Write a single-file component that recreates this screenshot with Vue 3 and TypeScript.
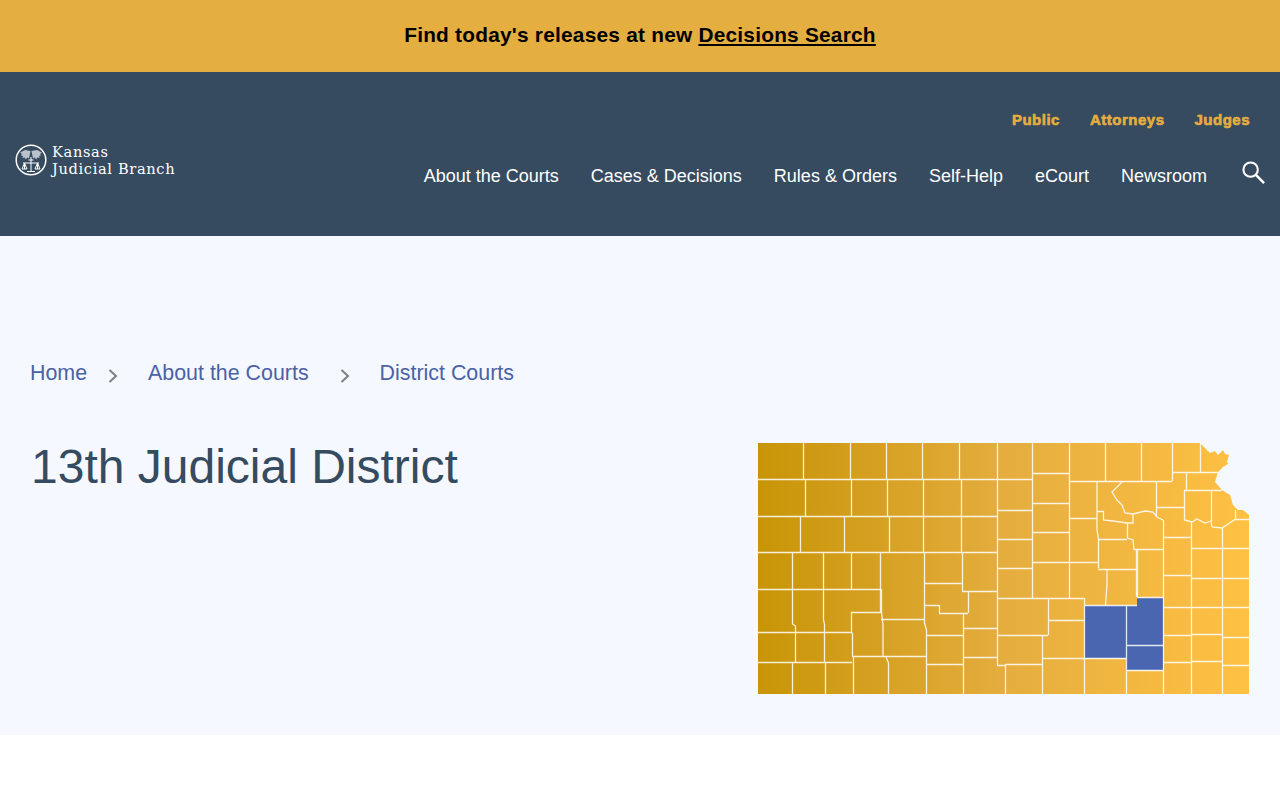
<template>
  <div class="page">
    <div class="banner">
      <p>Find today's releases at new <a href="#">Decisions Search</a></p>
    </div>

    <header class="header">
      <a class="logo" href="#">
        <svg class="seal" viewBox="0 0 32 32" width="32" height="32">
          <circle cx="16" cy="16" r="14.800" fill="none" stroke="#fff" stroke-width="1.500" />
          <path d="M15.500 7L10 6L5 8.500L7 10L6 11.500L8 12L7.500 14L10 13.500L10.500 15.500L12.500 13.500L14 14.500Z" fill="#b9c2ca" />
          <path d="M16.500 7L22 6L27 8.500L25 10L26 11.500L24 12L24.500 14L22 13.500L21.500 15.500L19.500 13.500L18 14.500Z" fill="#b9c2ca" />
          <path d="M16 13V27M8 19H24M13.500 16H18.500M9.500 19V25M22.500 19V25M7 25H12L9.500 19ZM20 25H25L22.500 19ZM12 27.500H20" fill="none" stroke="#fff" stroke-width="1" />
        </svg>
        <span class="logo-text"><span>Kansas</span><span>Judicial Branch</span></span>
      </a>

      <div class="header-right">
        <nav class="audience">
          <a v-for="item in audience" :key="item" href="#">{{ item }}</a>
        </nav>
        <div class="main-row">
          <nav class="main-nav">
            <a v-for="item in mainNav" :key="item" href="#">{{ item }}</a>
          </nav>
          <svg class="search" viewBox="0 0 24 24" width="23" height="23">
            <circle cx="9" cy="9" r="7.500" fill="none" stroke="#fff" stroke-width="2.200" />
            <path d="M14.500 14.500L23 23" fill="none" stroke="#fff" stroke-width="2.600" />
          </svg>
        </div>
      </div>
    </header>

    <main class="hero">
      <nav class="crumbs">
        <template v-for="(crumb, i) in crumbs" :key="crumb">
          <a href="#">{{ crumb }}</a>
          <svg v-if="i < crumbs.length - 1" class="chevron" viewBox="0 0 10 14" width="10" height="14">
            <path d="M1.500 1L8 7L1.500 13" fill="none" stroke="#7b7f88" stroke-width="2" />
          </svg>
        </template>
      </nav>

      <div class="hero-row">
        <h1>13th Judicial District</h1>
        <svg class="map" viewBox="758 443 491 251" width="491" height="251">
          <defs>
            <linearGradient id="mapFill" x1="0" y1="0" x2="1" y2="0">
              <stop offset="0" stop-color="#c89507" />
              <stop offset="0.5" stop-color="#e4ad3e" />
              <stop offset="1" stop-color="#ffc143" />
            </linearGradient>
          </defs>
          <path :d="outline" fill="url(#mapFill)" />
          <path v-for="d in selected" :key="d" :d="d" fill="#4a66b0" />
          <path :d="lines" fill="none" stroke="#fff" stroke-opacity="0.85" stroke-width="1.300" />
        </svg>
      </div>
    </main>
  </div>
</template>

<script setup lang="ts">
const audience = ['Public', 'Attorneys', 'Judges']
const mainNav = ['About the Courts', 'Cases & Decisions', 'Rules & Orders', 'Self-Help', 'eCourt', 'Newsroom']
const crumbs = ['Home', 'About the Courts', 'District Courts']

const outline = 'M758 443H1200L1205 448L1210 453L1215 451L1218 455L1223 450L1225 454L1229 455L1227 462L1228 464L1223 467L1218 472L1215 482L1222 490L1230 495L1233 505L1238 510L1243 510L1249 515V694H758Z'

const selected = [
  'M1084.500 605.500H1126V658H1084.500Z',
  'M1126 605.500H1137V597.500H1163V645H1126Z',
  'M1126 645H1163V670H1126Z'
]

// county borders traced off the map, west to east
const lines = [
  // row 1
  'M758 479.500H1032M803.500 443V479M850.500 443V479M886.500 443V479M922.500 443V479M959.500 443V479M997.500 443V665',
  'M1032.500 443V598M1069.500 443V598M1105.500 443V481M1141.500 443V481M1172.500 443V481M1200.500 443V472',
  'M1032 473.500H1069M1069 481.500H1172M1172 472.500H1218',
  // row 2 and 3
  'M758 516.500H997M805.500 480V516M851.500 480V516M887.500 480V516M923.500 480V552M961.500 480V516',
  'M758 552.500H997M800.500 516V552M844.500 516V552M889.500 516V552M961.500 516V552',
  // row 4 and 5
  'M758 589.500H881M792.500 552V624L795.500 626V662M823.500 552V620L824.500 624V662M851.500 552V589M880.500 552V612',
  'M758 632.500H852M851.500 612V632L852.500 634V657M851 612.500H881M881.500 589V612L883 625V656M881 619.500H924',
  'M758 662.500H852M852 656.500H926M792.500 662V694M825.500 662V694M853.500 657V694M886 657L888.500 663V694',
  // middle block
  'M924.500 552V623L926.500 630V694M962.500 552V591M924 583.500H962M962 591.500H997M968.500 591V613M939 613.500H968M939.500 605V613M924 605.500H939',
  'M963.500 613V694M926 635.500H963M926 664.500H963M963 628.500H997M963 657.500H997M997 665.500H1005M1005.500 665V694',
  'M997 510.500H1033M997 539.500H1033M997 568.500H1033M997 598.500H1084M997 635.500H1048',
  'M1033 503.500H1069M1033 532.500H1069M1033 562.500H1069M1048.500 598V635M1048 620.500H1084M1042.500 635V694M1005 664.500H1042M1042 658.500H1126M1084.500 598V694',
  // selected counties and what's round them
  'M1084 605.500H1137M1126.500 605V694M1137.500 597V550M1137 597.500H1163M1126 645.500H1163M1126 670.500H1163M1163.500 520V694',
  // odd ones in the river valley
  'M1097 481V530L1098.500 539V568M1097 511.500H1103.500V520L1113 521L1127 523L1133 523V514M1127.500 523V538L1133 540L1134 549.500H1163',
  'M1098 539.500H1127M1098 569.500H1136M1136.500 549V597M1107 569V585L1105.500 605',
  'M1069 518.500H1097M1069 562.500H1098',
  'M1156.500 481V517M1122 482L1112 492L1117 500L1122 505L1125 513L1133 514L1145 511L1153 512L1157 517L1163 520',
  // north east corner
  'M1156 507.500H1184M1186.500 472V490M1184.500 490V520L1192 522L1197 519L1205 523L1211 521L1212 527L1222 528L1235 519.500H1249M1184 490.500H1222M1211.500 490V521M1235.500 519V510',
  'M1191.500 522V694M1222.500 528V694M1163 537.500H1191M1163 575.500H1192M1163 607.500H1249M1163 635.500H1192M1163 662.500H1192',
  'M1191 548.500H1249M1192 578.500H1249M1192 634.500H1222M1222 637.500H1249M1192 661.500H1222M1222 665.500H1249'
].join('')
</script>

<style>
html,
body {
  margin: 0;
  background: #fff;
}
</style>

<style scoped>
.page {
  font-family: "Liberation Sans", Arial, sans-serif;
  min-height: 800px;
  background: #fff;
}

.banner {
  height: 72px;
  background: #e5ae40;
  display: flex;
  align-items: center;
  justify-content: center;
}
.banner p {
  margin: -2px 0 0;
  font-size: 20.800px;
  font-weight: 700;
  letter-spacing: 0.250px;
  color: #000;
}
.banner a {
  color: #000;
}

.header {
  height: 164px;
  background: #364b5f;
  display: flex;
  justify-content: space-between;
  align-items: center;
  box-sizing: border-box;
  padding: 0 14px 0 15px;
}
.logo {
  display: flex;
  align-items: center;
  gap: 5px;
  margin-top: 12px;
  text-decoration: none;
  color: #fff;
}
.seal {
  flex: none;
}
.logo-text {
  display: flex;
  flex-direction: column;
  font-family: "DejaVu Serif", "Liberation Serif", serif;
  font-size: 14.600px;
  line-height: 17px;
  letter-spacing: 0.650px;
}

.header-right {
  display: flex;
  flex-direction: column;
  align-items: flex-end;
  margin-top: 12px;
}
.audience {
  display: flex;
  gap: 30px;
  padding-right: 16px;
  margin-bottom: 33px;
  margin-top: -16px;
}
.audience a {
  font-size: 15px;
  font-weight: 700;
  letter-spacing: 0.500px;
  color: #e5ae40;
  text-decoration: none;
  -webkit-text-stroke: 0.6px #e5ae40;
}
.main-row {
  display: flex;
  align-items: center;
  gap: 36px;
  padding-right: 1px;
}
.main-nav {
  display: flex;
  gap: 32px;
  margin: -2px -1px 0 0;
}
.main-nav a {
  font-size: 18px;
  color: #fff;
  text-decoration: none;
}
.search {
  margin-bottom: 10px;
}

.hero {
  height: 499px;
  background: #f5f8fe;
  box-sizing: border-box;
  padding: 125px 31px 0 30px;
}
.crumbs {
  display: flex;
  align-items: center;
}
.crumbs a {
  font-size: 21.400px;
  color: #4a62a6;
  text-decoration: none;
}
.chevron {
  margin: 4px 30px 0 21px;
}
.chevron + a + .chevron {
  margin-left: 31px;
}
.hero-row {
  display: flex;
  justify-content: space-between;
  align-items: flex-start;
  margin-top: 57px;
}
h1 {
  margin: -4px 0 0;
  padding-left: 1px;
  font-size: 48px;
  line-height: 56px;
  font-weight: 400;
  color: #354b60;
}
.map {
  display: block;
  flex: none;
}
</style>
